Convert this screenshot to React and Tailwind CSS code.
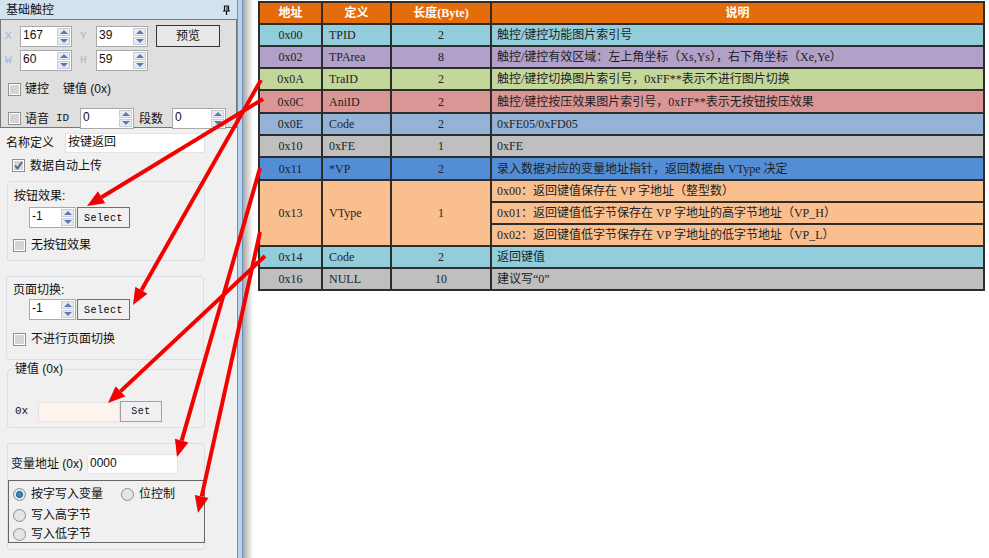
import React from "react";

const uiFont = "font-['Liberation_Sans','Noto_Sans_CJK_SC',sans-serif]";
const docFont = "font-['Liberation_Serif','Noto_Sans_CJK_SC',serif]";

const rows = [
  { addr: "0x00", def: "TPID", len: "2", desc: "触控/键控功能图片索引号", bg: "h-[22px] bg-[#92cddc]" },
  { addr: "0x02", def: "TPArea", len: "8", desc: "触控/键控有效区域：左上角坐标（Xs,Ys），右下角坐标（Xe,Ye）", bg: "h-[22px] bg-[#b1a0c7]" },
  { addr: "0x0A", def: "TraID", len: "2", desc: "触控/键控切换图片索引号，0xFF**表示不进行图片切换", bg: "h-[22px] bg-[#c4d79b]" },
  { addr: "0x0C", def: "AniID", len: "2", desc: "触控/键控按压效果图片索引号，0xFF**表示无按钮按压效果", bg: "h-[23px] bg-[#da9694]" },
  { addr: "0x0E", def: "Code", len: "2", desc: "0xFE05/0xFD05", bg: "h-[22px] bg-[#95b3d7]" },
  { addr: "0x10", def: "0xFE", len: "1", desc: "0xFE", bg: "h-[22px] bg-[#bfbfbf]" },
  { addr: "0x11", def: "*VP", len: "2", desc: "录入数据对应的变量地址指针，返回数据由 VType 决定", bg: "h-[23px] bg-[#538dd5]" },
];

const vtype = [
  "0x00：返回键值保存在 VP 字地址（整型数）",
  "0x01：返回键值低字节保存在 VP 字地址的高字节地址（VP_H）",
  "0x02：返回键值低字节保存在 VP 字地址的低字节地址（VP_L）",
];

const lastRows = [
  { addr: "0x14", def: "Code", len: "2", desc: "返回键值", bg: "h-[22px] bg-[#92cddc]" },
  { addr: "0x16", def: "NULL", len: "10", desc: "建议写“0”", bg: "h-[22px] bg-[#bfbfbf]" },
];

const arrows = [
  [263, 99, 87, 206],
  [261, 80, 133, 305],
  [265, 256, 108, 403],
  [260, 168, 177, 457],
  [260, 232, 198, 513],
];

const Spinner = ({ value, className }) => (
  <div className={`flex h-[21px] items-stretch border border-[#a9a9a9] bg-white p-px ${className}`}>
    <span className="flex-1 pl-px text-[12px] leading-[15px]">{value}</span>
    <div className="flex w-[13px] flex-col gap-px">
      <div className="flex flex-1 items-center justify-center border border-[#c4cdd8] bg-[#e6ebf2]">
        <div className="h-0 w-0 border-x-[4px] border-b-[4px] border-x-transparent border-b-[#5e78b5]" />
      </div>
      <div className="flex flex-1 items-center justify-center border border-[#c4cdd8] bg-[#e6ebf2]">
        <div className="h-0 w-0 border-x-[4px] border-t-[4px] border-x-transparent border-t-[#5e78b5]" />
      </div>
    </div>
  </div>
);

const Check = ({ checked }) => (
  <div className="flex h-[13px] w-[13px] shrink-0 items-center justify-center border border-[#8e8f8f] bg-white p-px">
    <div className="flex h-full w-full items-center justify-center bg-[#d5d5d5]">
      {checked && (
        <svg width="9" height="9" viewBox="0 0 9 9" fill="none">
          <path d="M1 4.5 L3.5 7.5 L8 1" stroke="#4a5f97" strokeWidth="1.8" />
        </svg>
      )}
    </div>
  </div>
);

const Radio = ({ checked }) => (
  <div className="flex h-[13px] w-[13px] shrink-0 items-center justify-center rounded-full border border-[#8e8f8f] bg-[#e4e4e4]">
    {checked && <div className="h-[7px] w-[7px] rounded-full border border-[#0d4f80] bg-[#2a8fd0]" />}
  </div>
);

const SelectBtn = () => (
  <button className="h-[21px] w-[53px] border border-[#6f6f6f] bg-[#f0f0f0] pt-[2px] font-['Liberation_Mono',monospace] text-[10px] tracking-[0.5px] text-black">
    Select
  </button>
);

const Coord = ({ children, className }) => (
  <span className={`font-['Liberation_Mono',monospace] text-[11px] text-[#9db6d6] ${className}`}>{children}</span>
);

const Cell = ({ children, className = "", ...props }) => (
  <td {...props} className={`border-2 border-[#2d2d2d] p-0 text-center ${className}`}>
    {children}
  </td>
);

const Desc = ({ children }) => (
  <td className="border-2 border-[#2d2d2d] py-0 pr-0 pl-[5px] text-left">{children}</td>
);

const Row = ({ r }) => (
  <tr className={r.bg}>
    <Cell>{r.addr}</Cell>
    <td className="border-2 border-[#2d2d2d] py-0 pr-0 pl-[6px] text-left">{r.def}</td>
    <Cell>{r.len}</Cell>
    <Desc>{r.desc}</Desc>
  </tr>
);

const Panel = () => (
  <div className={`flex h-full w-[237px] shrink-0 flex-col bg-[#f0f0f0] text-[12px] text-[#111] ${uiFont}`}>
    {/* title */}
    <div className="flex h-[19px] shrink-0 items-center justify-between bg-[#d3e2f1] pr-[6px] pl-[6px] pt-px">
      <span className="text-[12px] leading-none">基础触控</span>
      <svg width="9" height="10" viewBox="0 0 9 10" fill="none">
        <path d="M2.5 1H6.5V6H2.5ZM1 6H8M4.5 6V10" stroke="#111" strokeWidth="1.2" />
        <path d="M5 1.5V5.5" stroke="#111" strokeWidth="1" />
      </svg>
    </div>

    {/* top box */}
    <div className="flex h-[109px] shrink-0 flex-col border border-[#777] bg-[#dfdfdf] pt-[5px]">
      <div className="flex items-center">
        <Coord className="w-[19px] pl-[4px]">X</Coord>
        <Spinner value="167" className="w-[52px]" />
        <Coord className="ml-[8px] w-[16px]">Y</Coord>
        <Spinner value="39" className="w-[52px]" />
        <button className="ml-[8px] h-[22px] w-[64px] border border-[#333] bg-[#e8e8e8] text-[12px]">预览</button>
      </div>
      <div className="mt-[3px] flex items-center">
        <Coord className="w-[19px] pl-[4px]">W</Coord>
        <Spinner value="60" className="w-[52px]" />
        <Coord className="ml-[8px] w-[16px]">H</Coord>
        <Spinner value="59" className="w-[52px]" />
      </div>
      <div className="mt-[9px] flex items-center pl-[7px]">
        <Check />
        <span className="ml-[4px]">键控</span>
        <span className="ml-[14px]">键值 (0x)</span>
      </div>
      <div className="mt-[10px] flex items-center pl-[7px]">
        <Check />
        <span className="ml-[4px]">语音</span>
        <span className="ml-[7px] w-[24px] font-['Liberation_Mono',monospace] text-[11px]">ID</span>
        <Spinner value="0" className="w-[54px]" />
        <span className="ml-[5px] w-[33px]">段数</span>
        <Spinner value="0" className="w-[54px]" />
      </div>
    </div>

    {/* name */}
    <div className="mt-[5px] flex h-[20px] shrink-0 items-center pl-[6px]">
      <span className="w-[59px]">名称定义</span>
      <div className="h-[20px] w-[140px] border border-[#e3e3e3] bg-white pl-[2px] leading-[17px]">按键返回</div>
    </div>
    <div className="mt-[6px] flex h-[13px] shrink-0 items-center gap-[5px] pl-[12px]">
      <Check checked />
      <span>数据自动上传</span>
    </div>

    {/* button effect */}
    <div className="mt-[9px] ml-[7px] h-[80px] w-[198px] shrink-0 rounded-[3px] border border-[#d8dfe8] pl-[4px]">
      <div className="mt-[6px] ml-[2px] h-[16px] leading-[16px]">按钮效果:</div>
      <div className="mt-[3px] ml-[17px] flex gap-px">
        <Spinner value="-1" className="w-[47px]" />
        <SelectBtn />
      </div>
      <div className="mt-[8px] flex items-center gap-[5px] pl-px">
        <Check />
        <span>无按钮效果</span>
      </div>
    </div>

    {/* page switch */}
    <div className="mt-[15px] ml-[6px] h-[84px] w-[198px] shrink-0 rounded-[3px] border border-[#d8dfe8] pl-[6px]">
      <div className="mt-[5px] h-[16px] leading-[16px]">页面切换:</div>
      <div className="mt-px ml-[16px] flex gap-px">
        <Spinner value="-1" className="w-[47px]" />
        <SelectBtn />
      </div>
      <div className="mt-[10px] flex items-center gap-[5px]">
        <Check />
        <span>不进行页面切换</span>
      </div>
    </div>

    {/* key value */}
    <div className="relative mt-[9px] ml-[7px] h-[59px] w-[198px] shrink-0 rounded-[3px] border border-[#d8dfe8]">
      <span className="absolute -top-[9px] left-[6px] bg-[#f0f0f0] px-px leading-[16px]">键值 (0x)</span>
      <div className="mt-[31px] flex items-center pl-[7px]">
        <span className="w-[23px] font-['Liberation_Mono',monospace] text-[11px]">0x</span>
        <div className="h-[20px] w-[82px] border border-[#e3e3e3] bg-[#fff3ee]" />
        <button className="h-[21px] w-[42px] border border-[#a0a0a0] bg-[#f0f0f0] font-['Liberation_Mono',monospace] text-[10px] tracking-[0.5px]">
          Set
        </button>
      </div>
    </div>

    {/* variable */}
    <div className="mt-[15px] ml-[7px] h-[107px] w-[198px] shrink-0 rounded-[3px] border border-[#d8dfe8]">
      <div className="mt-[10px] flex items-center pl-[3px]">
        <span className="w-[76px]">变量地址 (0x)</span>
        <div className="h-[20px] w-[91px] border border-[#e3e3e3] bg-white pl-[2px] leading-[17px]">0000</div>
      </div>
      <div className="mt-[6px] h-[63px] w-[197px] border border-[#666] pl-[4px]">
        <div className="mt-[5px] flex h-[16px] items-center">
          <Radio checked />
          <span className="ml-[5px] w-[90px]">按字写入变量</span>
          <Radio />
          <span className="ml-[5px]">位控制</span>
        </div>
        <div className="mt-[5px] flex h-[16px] items-center gap-[5px]">
          <Radio />
          <span>写入高字节</span>
        </div>
        <div className="mt-[3px] flex h-[16px] items-center gap-[5px]">
          <Radio />
          <span>写入低字节</span>
        </div>
      </div>
    </div>
  </div>
);

const DocTable = () => (
  <table className={`w-[727px] table-fixed border-collapse text-[12px] leading-none text-[#222] ${docFont}`}>
    <colgroup>
      <col className="w-[63px]" />
      <col className="w-[69px]" />
      <col className="w-[100px]" />
      <col />
    </colgroup>
    <thead>
      <tr className="h-[22px] bg-[#e46c0a] font-bold text-white">
        <Cell>地址</Cell>
        <Cell>定义</Cell>
        <Cell>长度(Byte)</Cell>
        <Cell>说明</Cell>
      </tr>
    </thead>
    <tbody>
      {rows.map((r) => (
        <Row key={r.addr} r={r} />
      ))}
      {vtype.map((d, i) => (
        <tr key={d} className="h-[22px] bg-[#fabf8f]">
          {i === 0 && (
            <>
              <Cell rowSpan={3}>0x13</Cell>
              <td rowSpan={3} className="border-2 border-[#2d2d2d] py-0 pr-0 pl-[6px] text-left">
                VType
              </td>
              <Cell rowSpan={3}>1</Cell>
            </>
          )}
          <Desc>{d}</Desc>
        </tr>
      ))}
      {lastRows.map((r) => (
        <Row key={r.addr} r={r} />
      ))}
    </tbody>
  </table>
);

const Arrow = ({ a }) => {
  const [x1, y1, x2, y2] = a;
  const len = Math.hypot(x2 - x1, y2 - y1);
  const ux = (x2 - x1) / len;
  const uy = (y2 - y1) / len;
  const bx = x2 - ux * 17;
  const by = y2 - uy * 17;
  const head = `${x2},${y2} ${bx - uy * 7},${by + ux * 7} ${bx + uy * 7},${by - ux * 7}`;
  return (
    <>
      <line x1={x1} y1={y1} x2={bx} y2={by} stroke="#f40000" strokeWidth="4" />
      <polygon points={head} fill="#f40000" />
    </>
  );
};

export default function App() {
  return (
    <div className="relative flex h-[558px] w-[989px] overflow-hidden bg-white">
      <Panel />
      {/* scroll strip + shadow */}
      <div className="w-[6px] shrink-0 border-x border-x-[#6f8fb0] bg-[#b5d4f2]" />
      <div className="w-[10px] shrink-0 bg-gradient-to-r from-[#a8a8a8] to-white" />
      <div className="pt-px pl-[5px]">
        <DocTable />
      </div>
      {/* red arrows over everything */}
      <svg className="absolute inset-0 h-full w-full" viewBox="0 0 989 558">
        {arrows.map((a) => (
          <Arrow key={a.join()} a={a} />
        ))}
      </svg>
    </div>
  );
}
